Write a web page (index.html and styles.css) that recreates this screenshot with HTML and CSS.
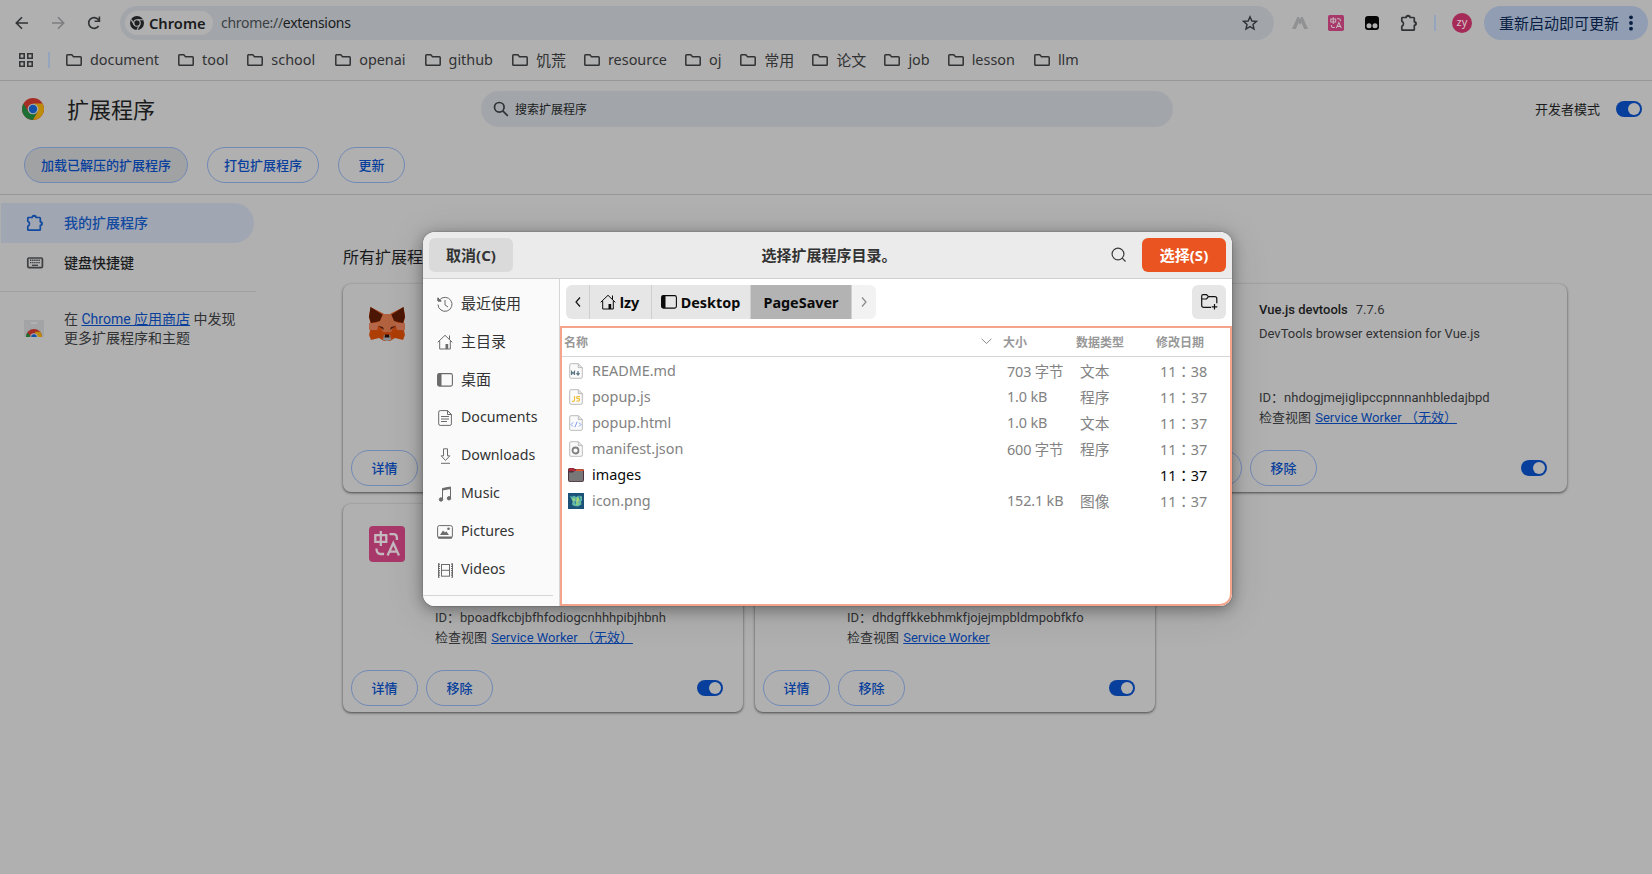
FILE: index.html
```html
<!DOCTYPE html>
<html lang="zh-CN">
<head>
<meta charset="utf-8">
<title>扩展程序</title>
<link rel="stylesheet" href="styles.css">
</head>
<body>
<svg class="defs" width="0" height="0">
  <defs>
    <symbol id="folder" viewBox="0 0 16 12"><path d="M1.6.8h4.2l1.7 1.9h6.9q.8 0 .8.8v7q0 .8-.8.8H1.6q-.8 0-.8-.8V1.600q0-.8.8-.8z" fill="none" stroke="currentColor" stroke-width="1.5"/></symbol>
    <symbol id="puzzle" viewBox="0 0 18 18"><path d="M2 3.500h4.200a1.900 1.900 0 0 1 3.800 0h3.500q.8 0 .8.8V7.800a1.800 1.800 0 0 1 0 3.600v4q0 .8-.8.8H2.600q-.8 0-.8-.8v-3.200a2.700 2.700 0 0 0 0-5V4.300q0-.8.8-.8z" fill="none" stroke="currentColor" stroke-width="1.7" stroke-linejoin="round"/><path d="M6.500 3a1.700 1.700 0 0 1 3.200 0zM14.800 8a1.700 1.700 0 0 1 0 3.200z" fill="currentColor"/></symbol>
    <symbol id="translate" viewBox="0 0 36 36"><rect width="36" height="36" rx="4" fill="#a9386a"/><g fill="none" stroke="#c4b9be" stroke-width="2.300"><path d="M6.300 9.200h11v6.600h-11zM11.800 5v15M20.500 8.200h4q3.400 0 3.400 3.800v2M7.500 22.500q0 5.500 4 5.500h3.600"/><path d="M18.600 29.500l5.700-12.500 5.700 12.500M20.800 25.600h7"/></g></symbol>
    <symbol id="home" viewBox="0 0 16 16"><path d="M.7 8.300L8 1.300l7.300 7M2.700 7v8h10.600V7M12.500 1.500v4" fill="none" stroke="currentColor"/><path d="M8.500 10h2.700v5H8.500z" fill="currentColor"/></symbol>
    <symbol id="desk" viewBox="0 0 16 14"><rect x=".6" y=".6" width="14.800" height="12.500" rx="1.800" fill="none" stroke="currentColor" stroke-width="1.100"/><path d="M2 .6h2.500v12.500H2Q.6 13 .6 11.500V2Q.6.7 2 .6z" fill="currentColor"/></symbol>
    <symbol id="file" viewBox="0 0 16 16"><path d="M3 .7h7.500l3.800 3.800V14q0 1.300-1.300 1.300H3Q1.700 15.300 1.700 14V2Q1.700.7 3 .7z" fill="#fafafa" stroke="#bcbcbc"/><path d="M10.300.7v3.900h4" fill="#e4e4e4" stroke="#bcbcbc"/></symbol>
  </defs>
</svg>

<header class="browser">
  <div class="toolbar">
    <svg class="nav" viewBox="0 0 16 16"><path d="M14 8H2.500M8 2.300L2.300 8 8 13.700"/></svg>
    <svg class="nav nav-off" viewBox="0 0 16 16"><path d="M2 8h11.500M8 2.300L13.700 8 8 13.700"/></svg>
    <svg class="nav" viewBox="0 0 16 16"><path d="M12.600 11A5.400 5.400 0 1 1 12.300 4.600L13.300 5.800M13.400 1.500v4.800H8.600"/></svg>
    <div class="omnibox">
      <div class="chip">
        <svg width="14" height="14" viewBox="0 0 16 16"><circle cx="8" cy="8" r="8" fill="#1d1f21"/><g fill="none" stroke="#b0b0b0" stroke-width="1.300"><circle cx="8" cy="8" r="3.700"/><path d="M8 4.300h7M4.800 9.900L1.400 4.100M11.200 9.900L7.900 16"/></g></svg>
        <b>Chrome</b>
      </div>
      <span class="url"><i>chrome://</i>extensions</span>
      <svg class="star" width="16" height="16" viewBox="0 0 16 16"><path d="M8 1.700l1.850 4.300 4.650.4-3.530 3.060 1.060 4.540L8 11.600 3.970 14l1.060-4.540L1.500 6.400l4.650-.4z" fill="none" stroke="#2f3133" stroke-width="1.400"/></svg>
    </div>
    <svg class="ext" width="16" height="14" viewBox="0 0 16 14"><path d="M5.300 1h1.700L8 3.500 9 1h1.700L16 13h-3.800L9.300 6.500 8 9 6.700 6.500 3.800 13H0z" fill="#909193"/></svg>
    <svg class="ext" width="16" height="16"><use href="#translate"/></svg>
    <svg class="ext" width="14" height="14" viewBox="0 0 14 14"><rect width="14" height="14" rx="3" fill="#050505"/><circle cx="4" cy="9.700" r="2.500" fill="#b0b0b0"/><circle cx="10" cy="9.700" r="2.500" fill="#b0b0b0"/></svg>
    <svg class="ext dark" width="18" height="18"><use href="#puzzle"/></svg>
    <span class="vbar"></span>
    <span class="avatar">zy</span>
    <button class="update"><span>重新启动即可更新</span><svg width="4" height="16" viewBox="0 0 4 16" fill="#071e42"><circle cx="2" cy="2.300" r="1.900"/><circle cx="2" cy="8" r="1.900"/><circle cx="2" cy="13.700" r="1.900"/></svg></button>
  </div>
  <nav class="bookmarks">
    <svg class="apps" width="14" height="14" viewBox="0 0 14 14" fill="none" stroke="#353638" stroke-width="1.600"><path d="M.8.8h4.400v4.400H.8zM8.800.8h4.400v4.400H8.800zM.8 8.800h4.400v4.400H.8zM8.800 8.800h4.400v4.400H8.800z"/></svg>
    <span class="vbar"></span>
    <a class="bm"><svg><use href="#folder"/></svg><span>document</span></a>
    <a class="bm"><svg><use href="#folder"/></svg><span>tool</span></a>
    <a class="bm wide"><svg><use href="#folder"/></svg><span>school</span></a>
    <a class="bm"><svg><use href="#folder"/></svg><span>openai</span></a>
    <a class="bm"><svg><use href="#folder"/></svg><span>github</span></a>
    <a class="bm cjk"><svg><use href="#folder"/></svg><span>饥荒</span></a>
    <a class="bm tight"><svg><use href="#folder"/></svg><span>resource</span></a>
    <a class="bm"><svg><use href="#folder"/></svg><span>oj</span></a>
    <a class="bm cjk"><svg><use href="#folder"/></svg><span>常用</span></a>
    <a class="bm cjk"><svg><use href="#folder"/></svg><span>论文</span></a>
    <a class="bm tight"><svg><use href="#folder"/></svg><span>job</span></a>
    <a class="bm"><svg><use href="#folder"/></svg><span>lesson</span></a>
    <a class="bm"><svg><use href="#folder"/></svg><span>llm</span></a>
  </nav>
</header>

<section class="head">
  <div class="head-top">
    <div class="brand">
      <svg width="22" height="22" viewBox="0 0 22 22"><circle cx="11" cy="11" r="11" fill="#a62d24"/><path d="M1.500 5.500A11 11 0 0 0 11 22l4.600-8.300H6.300z" fill="#1c7034"/><path d="M20.600 5.600H11l4.700 8.200L11 22A11 11 0 0 0 20.600 5.600z" fill="#bd8c0c"/><circle cx="11" cy="11" r="5.300" fill="#b0b0b0"/><circle cx="11" cy="11" r="4.200" fill="#1352a8"/></svg>
      <h1>扩展程序</h1>
    </div>
    <div class="search"><svg width="16" height="16" viewBox="0 0 16 16" fill="none" stroke="#2f3133" stroke-width="1.700"><circle cx="6.300" cy="6.300" r="4.800"/><path d="M9.800 9.800l5 5"/></svg><span>搜索扩展程序</span></div>
    <div class="dev"><span class="up">开发者模式</span><span class="toggle"></span></div>
  </div>
  <div class="actions">
    <button class="pill hover">加载已解压的扩展程序</button>
    <button class="pill">打包扩展程序</button>
    <button class="pill">更新</button>
  </div>
</section>

<div class="page">
  <aside class="side">
    <a class="item on"><svg width="18" height="18"><use href="#puzzle"/></svg><span>我的扩展程序</span></a>
    <a class="item"><svg width="18" height="18" viewBox="0 0 18 18"><rect x="1.800" y="4" width="14.600" height="9.600" rx="1.200" fill="none" stroke="#3d3f41" stroke-width="1.700"/><path d="M4 6.300h10M4 8.600h10" stroke="#3d3f41" stroke-width="1.400" stroke-dasharray="1.400 .7"/><path d="M6 11.300h6" stroke="#3d3f41" stroke-width="1.300"/></svg><span>键盘快捷键</span></a>
    <div class="store">
      <svg width="20" height="18" viewBox="0 0 20 18"><path d="M0 0h20v16q0 1-1 1H1q-1 0-1-1z" fill="#a2a4a6"/><path d="M7 3h6" stroke="#bbb" stroke-width="1.200"/><path d="M2 17a8 8 0 0 1 16 0z" fill="#a62d24"/><path d="M2 17a8 8 0 0 1 1.600-4.600L7 17z" fill="#1c7034"/><path d="M12 17l-1-5.200h5.200A8 8 0 0 1 18 17z" fill="#bd8c0c"/><path d="M6.200 17a3.800 3.800 0 0 1 7.600 0z" fill="#b0b0b0"/><path d="M7.200 17a2.800 2.800 0 0 1 5.600 0z" fill="#1352a8"/></svg>
      <p>在 <a>Chrome 应用商店</a> 中发现<br>更多扩展程序和主题</p>
    </div>
  </aside>
  <main class="main">
    <h2>所有扩展程序</h2>
    <div class="grid">
      <article class="card">
        <div class="info">
          <svg class="logo" viewBox="0 0 36 36"><path d="M1.500 1L15 8h6L34.500 1 36 11l-2 9 2 9-2 5-8-2-5 3h-6l-5-3-8 2-2-5 2-9-2-9z" fill="#b0410f"/><path d="M1.500 1L14 9l-3 6-9 2-2-6zM34.500 1L22 9l3 6 9 2 2-6z" fill="#4c1604"/><path d="M14 8h8l3 7 9 4-9 1-3 6h-8l-3-6-9-1 9-4z" fill="#b2623f"/><path d="M0 17h10l-2 7H0zM36 17H26l2 7h8z" fill="#b5674a"/><path d="M2 25l10-1 2 7-12 2zM34 25l-10-1-2 7 12 2z" fill="#ad3e05"/><path d="M9 20l5 1 1 3zM27 20l-5 1-1 3z" fill="#471b0d"/><path d="M15 29h6l1 5-4 1-4-1z" fill="#8a8e94"/><path d="M16 28.500h4l.5 3h-5z" fill="#240b04"/></svg>
        </div>
        <footer><button class="pill">详情</button></footer>
      </article>
      <article class="card"></article>
      <article class="card">
        <div class="info">
          <div class="logo"></div>
          <div class="text">
            <p class="name"><b>Vue.js devtools</b>7.7.6</p>
            <p class="desc">DevTools browser extension for Vue.js</p>
            <p class="id">ID：nhdogjmejiglipccpnnnanhbledajbpd</p>
            <p class="id">检查视图 <a>Service Worker （无效）</a></p>
          </div>
        </div>
        <footer><button class="pill"></button><button class="pill">移除</button><span class="toggle"></span></footer>
      </article>
      <article class="card">
        <div class="info">
          <svg class="logo"><use href="#translate"/></svg>
          <div class="text">
            <p class="name"></p>
            <p class="desc"></p>
            <p class="id">ID：bpoadfkcbjbfhfodiogcnhhhpibjhbnh</p>
            <p class="id">检查视图 <a>Service Worker （无效）</a></p>
          </div>
        </div>
        <footer><button class="pill">详情</button><button class="pill">移除</button><span class="toggle"></span></footer>
      </article>
      <article class="card">
        <div class="info">
          <div class="logo"></div>
          <div class="text">
            <p class="name"></p>
            <p class="desc"></p>
            <p class="id">ID：dhdgffkkebhmkfjojejmpbldmpobfkfo</p>
            <p class="id">检查视图 <a>Service Worker</a></p>
          </div>
        </div>
        <footer><button class="pill">详情</button><button class="pill">移除</button><span class="toggle"></span></footer>
      </article>
    </div>
  </main>
</div>

<div class="dialog">
  <div class="titlebar">
    <button class="btn">取消(C)</button>
    <h3>选择扩展程序目录。</h3>
    <svg class="find" width="16" height="16" viewBox="0 0 16 16" fill="none" stroke="#3a3a3a" stroke-width="1.200"><circle cx="7" cy="7" r="5.900"/><path d="M11.200 11.200l3.300 3.300"/></svg>
    <button class="btn go">选择(S)</button>
  </div>
  <div class="body">
    <ul class="places">
      <li><svg viewBox="0 0 16 16" fill="none" stroke="#6b6b6b"><path d="M2.500 4A7 7 0 1 1 1 8.500M8 4v5l3 2M1 1.500V5h3.500"/><path d="M1 2v3h3z" fill="#6b6b6b"/></svg>最近使用</li>
      <li><svg><use href="#home"/></svg>主目录</li>
      <li><svg><use href="#desk"/></svg>桌面</li>
      <li class="en"><svg viewBox="0 0 16 16" fill="none" stroke="#6b6b6b"><path d="M3.200.6h7.300L14.400 4.500v9.400q0 1.500-1.500 1.500H3.200q-1.500 0-1.500-1.500V2.100Q1.700.6 3.200.6z"/><path d="M10.500.6v3.900h4zM4 6.500h8M4 9h8M4 11.500h6"/></svg>Documents</li>
      <li class="en"><svg viewBox="0 0 16 16" fill="none" stroke="#6b6b6b"><path d="M6.500.8h4v7h2.300L8.500 12.500 4.200 7.800h2.300zM4 15.300h9"/></svg>Downloads</li>
      <li class="en"><svg viewBox="0 0 16 16" fill="none" stroke="#6b6b6b"><path d="M5.500 13.500V2.500l8-1.500v11"/><path d="M5.500 3.500l8-1.500" stroke-width="2"/><circle cx="4" cy="13.500" r="1.700" fill="#6b6b6b"/><circle cx="12" cy="12.300" r="1.700" fill="#6b6b6b"/></svg>Music</li>
      <li class="en"><svg viewBox="0 0 16 16" fill="none" stroke="#6b6b6b"><rect x=".6" y="1.600" width="14.800" height="12.500" rx="1.800"/><path d="M1 13.500h14" stroke-width="1.800"/><path d="M3 11l3-4.500 2 2 1.300-1.300L12 11z" fill="#6b6b6b" stroke="none"/><circle cx="11.500" cy="4.800" r="1.300" fill="#6b6b6b" stroke="none"/></svg>Pictures</li>
      <li class="en"><svg viewBox="0 0 16 16" fill="none" stroke="#6b6b6b"><path d="M4.500 2v12.500M12.500 2v12.500M4.500 2.500h8M4.500 8.300h8M4.500 14.200h8"/><path d="M2 1.500v14M15 1.500v14" stroke-width="2" stroke-dasharray="1.200 1"/><path d="M1.500 1.500v14M15.500 1.500v14"/></svg>Videos</li>
    </ul>
    <div class="files">
      <div class="pathrow">
        <div class="path">
          <span class="seg prev"><svg width="6" height="10" viewBox="0 0 6 10"><path d="M5 .5L1 5l4 4.500" fill="none" stroke="#111" stroke-width="1.200"/></svg></span>
          <span class="seg lzy"><svg width="16" height="16"><use href="#home"/></svg>lzy</span>
          <span class="seg desktop"><svg width="16" height="14"><use href="#desk"/></svg>Desktop</span>
          <span class="seg cur">PageSaver</span>
          <span class="seg next"><svg width="6" height="10" viewBox="0 0 6 10"><path d="M1 .5L5 5 1 9.500" fill="none" stroke="#888" stroke-width="1.200"/></svg></span>
        </div>
        <span class="newdir"><svg width="17" height="16" viewBox="0 0 17 16" fill="none" stroke="#111" stroke-width="1.200"><path d="M10 13.400H2.800Q.7 13.400.7 11.400V2.200Q.7.700 2.200.7h3.300l2 2h6.300q2 0 2 2v4.500M.7 5h4.800l2-2.300M13.500 10v5.600M10.700 12.800h5.600"/></svg></span>
      </div>
      <div class="list">
        <div class="row cols"><span class="c-name">名称<svg width="11" height="7" viewBox="0 0 11 7"><path d="M.6.800l4.900 4.700L10.400.8" fill="none" stroke="#8a8a8a"/></svg></span><span class="c-size">大小</span><span class="c-type">数据类型</span><span class="c-date">修改日期</span></div>
        <div class="row"><svg viewBox="0 0 16 16"><use href="#file"/><path d="M3.500 12V8.500l1.500 2 1.500-2V12M10 8v3.500M8.500 10.200L10 12l1.500-1.800" fill="none" stroke="#5b7482" stroke-width="1.200"/></svg><span class="c-name">README.md</span><span class="c-size">703 字节</span><span class="c-type">文本</span><span class="c-date">11：38</span></div>
        <div class="row"><svg viewBox="0 0 16 16"><use href="#file"/><path d="M6.500 7v4q0 1.300-1.300 1.300H4M12 7.600H9.600q-1 0-1 1t1 1h1q1 0 1 1.200t-1 1.300H8.500" fill="none" stroke="#eec03c" stroke-width="1.200"/></svg><span class="c-name">popup.js</span><span class="c-size">1.0 kB</span><span class="c-type">程序</span><span class="c-date">11：37</span></div>
        <div class="row"><svg viewBox="0 0 16 16"><use href="#file"/><path d="M5 7.500L3 9.500l2 2M11 7.500l2 2-2 2M9 6.800l-2 5.400" fill="none" stroke="#7f9df0"/></svg><span class="c-name">popup.html</span><span class="c-size">1.0 kB</span><span class="c-type">文本</span><span class="c-date">11：37</span></div>
        <div class="row"><svg viewBox="0 0 16 16"><use href="#file"/><circle cx="7.500" cy="9.500" r="3" fill="none" stroke="#808080" stroke-width="1.800"/></svg><span class="c-name">manifest.json</span><span class="c-size">600 字节</span><span class="c-type">程序</span><span class="c-date">11：37</span></div>
        <div class="row dir"><svg viewBox="0 0 16 16"><path d="M0 2.500Q0 1 1.500 1h4L7 2h7.500Q16 2 16 3.500V13q0 2-2 2H2q-2 0-2-2z" fill="#50323b"/><path d="M.8 2.500Q1 1.300 2 1.300h3.500L7 3h8.500v1H.8z" fill="#b4283a"/><path d="M8 2.300h6.500q1 .2 1 1.700H8z" fill="#e2552e"/><path d="M1 5.500h4L6.500 4H15v9q0 1.200-1.200 1.200H2.200Q1 14.200 1 13z" fill="#777"/></svg><span class="c-name">images</span><span class="c-size"></span><span class="c-type"></span><span class="c-date">11：37</span></div>
        <div class="row"><svg viewBox="0 0 16 16"><path d="M0 0h16v16H0z" fill="#1c5278"/><path d="M2 3l2.500.5L6 2.500l2 1.500 3-1.500 3 1v4l-1 1 .5 3-3.500 2-4-.5-2-1.500.5-3z" fill="#62b6a6"/><path d="M4 5l3 1-1 3zM9 4l3 2-3 4 3 1-4 1z" fill="#a9d873"/><path d="M3 3l2 1M11 3l1 4M7 8l1 3" stroke="#2d7fa0"/></svg><span class="c-name">icon.png</span><span class="c-size">152.1 kB</span><span class="c-type">图像</span><span class="c-date">11：37</span></div>
      </div>
    </div>
  </div>
</div>
</body>
</html>
```
FILE: styles.css
```css
* { box-sizing: border-box; }
body { margin: 0; width: 1652px; height: 874px; overflow: hidden; position: relative; background: #b0b0b0; color: #1a1b1c; font-family: Roboto, "Noto Sans CJK SC", sans-serif; font-size: 13px; }
h1, h2, h3, p, ul { margin: 0; padding: 0; font-weight: 400; }
button { font: inherit; border: 0; padding: 0; margin: 0; }
svg { display: block; flex: none; overflow: visible; }
.defs { position: absolute; }

.browser { height: 81px; border-bottom: 1px solid #969799; font-family: "Noto Sans", "Noto Sans CJK SC", sans-serif; }
.toolbar { display: flex; align-items: center; height: 46px; padding: 0 4px 0 14px; }
.nav { width: 16px; height: 16px; margin-right: 20px; fill: none; stroke: #303234; stroke-width: 1.6; }
.nav:nth-child(3) { margin-right: 18px; }
.nav-off { stroke: #7d7e80; }
.omnibox { display: flex; align-items: center; width: 1154px; height: 34px; padding: 0 16px 0 5px; border-radius: 17px; background: #a2a6ab; }
.chip { display: flex; align-items: center; gap: 5px; width: 88px; height: 24px; padding: 0 0 1px 5px; border-radius: 12px; background: #b0b0b0; font-size: 14.7px; }
.chip b { font-weight: 600; }
.url { margin-left: 8px; padding-bottom: 1px; font-size: 14px; letter-spacing: -.3px; }
.url i { font-style: normal; color: #3c3f42; }
.star { margin-left: auto; }
.ext { margin-left: 20px; }
.ext:nth-of-type(4) { margin-left: 18px; }
.ext:nth-of-type(6), .ext:nth-of-type(7) { margin-left: 21px; }
.dark { color: #303234; }
.toolbar .vbar { margin-left: 16px; }
.vbar { width: 2px; height: 16px; background: #95a5bf; }
.avatar { width: 20px; height: 20px; margin-left: 16px; border-radius: 50%; background: #a62a57; color: #d4c4ca; font-size: 11px; line-height: 17px; text-align: center; }
.update { display: flex; align-items: center; flex: none; width: 164px; height: 34px; margin-left: 12px; padding-left: 15px; border-radius: 17px; background: #919db3; color: #071e42; font-size: 15px; gap: 10px; white-space: nowrap; }
.update span, .dev .up, .search span, .item span { padding-bottom: 2px; }
.bookmarks { display: flex; align-items: center; height: 28px; padding-left: 19px; color: #303234; font-size: 14.4px; }
.bookmarks .vbar { margin: 0 16px 0 15px; }
.bm { display: flex; align-items: center; gap: 8px; margin-right: 19px; white-space: nowrap; }
.bm svg { width: 16px; height: 12px; }
.bm span { line-height: 20px; }
.cjk { margin-right: 18px; font-size: 15px; }
.wide { margin-right: 20px; }
.tight { margin-right: 18px; }

.head { height: 114px; border-bottom: 1px solid #969799; }
.head-top { display: grid; grid-template-columns: 481px 692px 1fr; align-items: center; height: 56px; }
.brand { display: flex; align-items: center; gap: 23px; padding-left: 22px; }
.brand svg { margin-top: -1px; }
h1 { font-size: 22px; line-height: 30px; padding-top: 4px; }
.search { display: flex; align-items: center; gap: 6px; height: 36px; padding-left: 12px; border-radius: 18px; background: #a2a6ab; font-size: 12px; }
.dev { display: flex; align-items: center; justify-content: flex-end; gap: 16px; padding-right: 10px; }
.toggle { display: flex; justify-content: flex-end; align-items: center; width: 26px; height: 16px; padding-right: 2px; border-radius: 8px; background: #083f9c; }
.toggle::after { content: ""; width: 12px; height: 12px; border-radius: 50%; background: #b0b0b0; }
.actions { display: flex; gap: 19px; padding: 10px 0 0 24px; }
.pill { min-width: 67px; height: 36px; padding: 0 14px 2px; border: 1px solid #7189b5; border-radius: 18px; background: transparent; color: #083f9c; font-weight: 500; white-space: nowrap; }
.hover { background: #a1a2a4; }
.actions .pill:nth-child(1) { width: 164px; }
.actions .pill:nth-child(2) { width: 112px; }

.page { display: flex; }
.side { width: 257px; padding-top: 8px; font-size: 14px; }
.item { display: flex; align-items: center; gap: 20px; width: 253px; height: 40px; margin-left: 1px; padding-left: 25px; border-radius: 0 20px 20px 0; font-weight: 500; }
.on { background: #a1a6b3; color: #124a9f; }
.store { display: flex; gap: 20px; width: 256px; margin-top: 8px; padding: 18px 0 0 24px; border-top: 1px solid #9fa0a2; color: #303234; }
.store svg { margin-top: 10px; }
.store p { line-height: 19px; white-space: nowrap; }
a { color: inherit; }
p a { color: #083f9c; text-decoration: underline; }
.main { padding: 49px 0 0 86px; }
h2 { height: 40px; font-size: 16px; line-height: 28px; }
.grid { display: grid; grid-template-columns: repeat(3, 400px); gap: 12px; }
.card { display: flex; flex-direction: column; height: 208px; border-radius: 8px; box-shadow: 0 1px 3px rgba(0,0,0,.4), 0 1px 2px rgba(0,0,0,.25); }
.info { display: flex; flex: 1; padding: 16px 0 0 26px; }
.logo { width: 36px; height: 36px; margin: 6px 30px 0 0; }
.text { white-space: nowrap; color: #303234; }
.name { height: 20px; line-height: 20px; }
.name b { margin-right: 8px; font-weight: 500; color: #1a1b1c; }
.desc { height: 68px; padding-top: 4px; line-height: 20px; }
.id { height: 20px; line-height: 20px; }
.id a { margin-left: 1px; }
footer { display: flex; align-items: center; gap: 8px; padding: 0 20px 6px 8px; }
footer .toggle { margin-left: auto; }

.dialog { position: absolute; left: 423px; top: 232px; width: 809px; height: 374px; border-radius: 12px; overflow: hidden; background: #fff; box-shadow: 0 3px 14px 1px rgba(0,0,0,.32), 0 0 1px 1px rgba(0,0,0,.1), 0 6px 40px rgba(0,0,0,.12); font-family: "Noto Sans", "Noto Sans CJK SC", sans-serif; font-size: 14.4px; color: #333; }
.titlebar { display: flex; align-items: center; height: 47px; padding: 0 6px; background: #ebebeb; border-bottom: 1px solid #cfcfcf; }
.btn { width: 84px; height: 34px; padding-bottom: 2px; border-radius: 6px; background: #dadada; color: #333; font-weight: 700; font-size: 15px; }
.go { background: #e95420; color: #fff; }
h3 { flex: 1; padding: 0 0 1px 34px; text-align: center; font-size: 15px; font-weight: 700; }
.find { margin: 0 15px 0 0; }
.body { display: flex; height: 327px; }
.places { width: 137px; padding: 6px 0 0; list-style: none; background: #fafafa; border-right: 1px solid #d5d5d5; color: #333; }
.places::after { content: ""; display: block; width: 130px; height: 1px; margin-top: 6px; background: #d5d5d5; }
.places li { display: flex; align-items: center; gap: 8px; height: 38px; padding: 0 0 3px 14px; font-size: 15px; }
.places .en { font-size: 14.2px; }
.places svg { width: 16px; height: 16px; margin-top: 3px; color: #6b6b6b; }
.files { flex: 1; display: flex; flex-direction: column; }
.pathrow { display: flex; justify-content: space-between; height: 47px; padding: 6px 6px 0; }
.path { display: flex; height: 34px; border-radius: 6px; overflow: hidden; font-size: 14.4px; font-weight: 700; color: #0a0a0a; }
.seg { display: flex; align-items: center; justify-content: center; gap: 4px; background: #e6e6e6; border-right: 1px solid #cfcfcf; }
.prev { width: 24px; }
.lzy { width: 62px; padding-right: 2px; }
.desktop { width: 99px; padding-right: 1px; }
.cur { width: 101px; background: #b3b3b3; }
.next { width: 24px; background: #f2f2f2; border: 0; }
.newdir { display: flex; align-items: center; justify-content: center; width: 34px; height: 34px; border-radius: 6px; background: #e6e6e6; }
.list { flex: 1; border: 2px solid #f5a48b; border-radius: 0 0 12px 0; }
.row { display: flex; align-items: center; height: 26px; padding: 0 0 2px 6px; color: #828282; white-space: nowrap; }
.row > svg { width: 16px; height: 16px; margin: 2px 8px 0 0; }
.row .c-name { width: 415px; }
.c-size { width: 73px; letter-spacing: -.15px; }
.c-type { width: 80px; font-size: 14.7px; }
.c-date { font-family: "Noto Sans", "Noto Sans CJK JP", sans-serif; font-size: 14.4px; }
.dir { color: #0a0a0a; }
.cols { height: 29px; margin-bottom: 1px; padding: 0 0 1px 2px; border-bottom: 1px solid #d5d5d5; color: #989898; font-size: 12px; font-weight: 700; }
.cols span { font-size: 12px; letter-spacing: 0; }
.cols .c-date { font-family: "Noto Sans", "Noto Sans CJK SC", sans-serif; }
.row.cols .c-name { display: flex; justify-content: space-between; align-items: center; width: 439px; padding-right: 11px; }
```
